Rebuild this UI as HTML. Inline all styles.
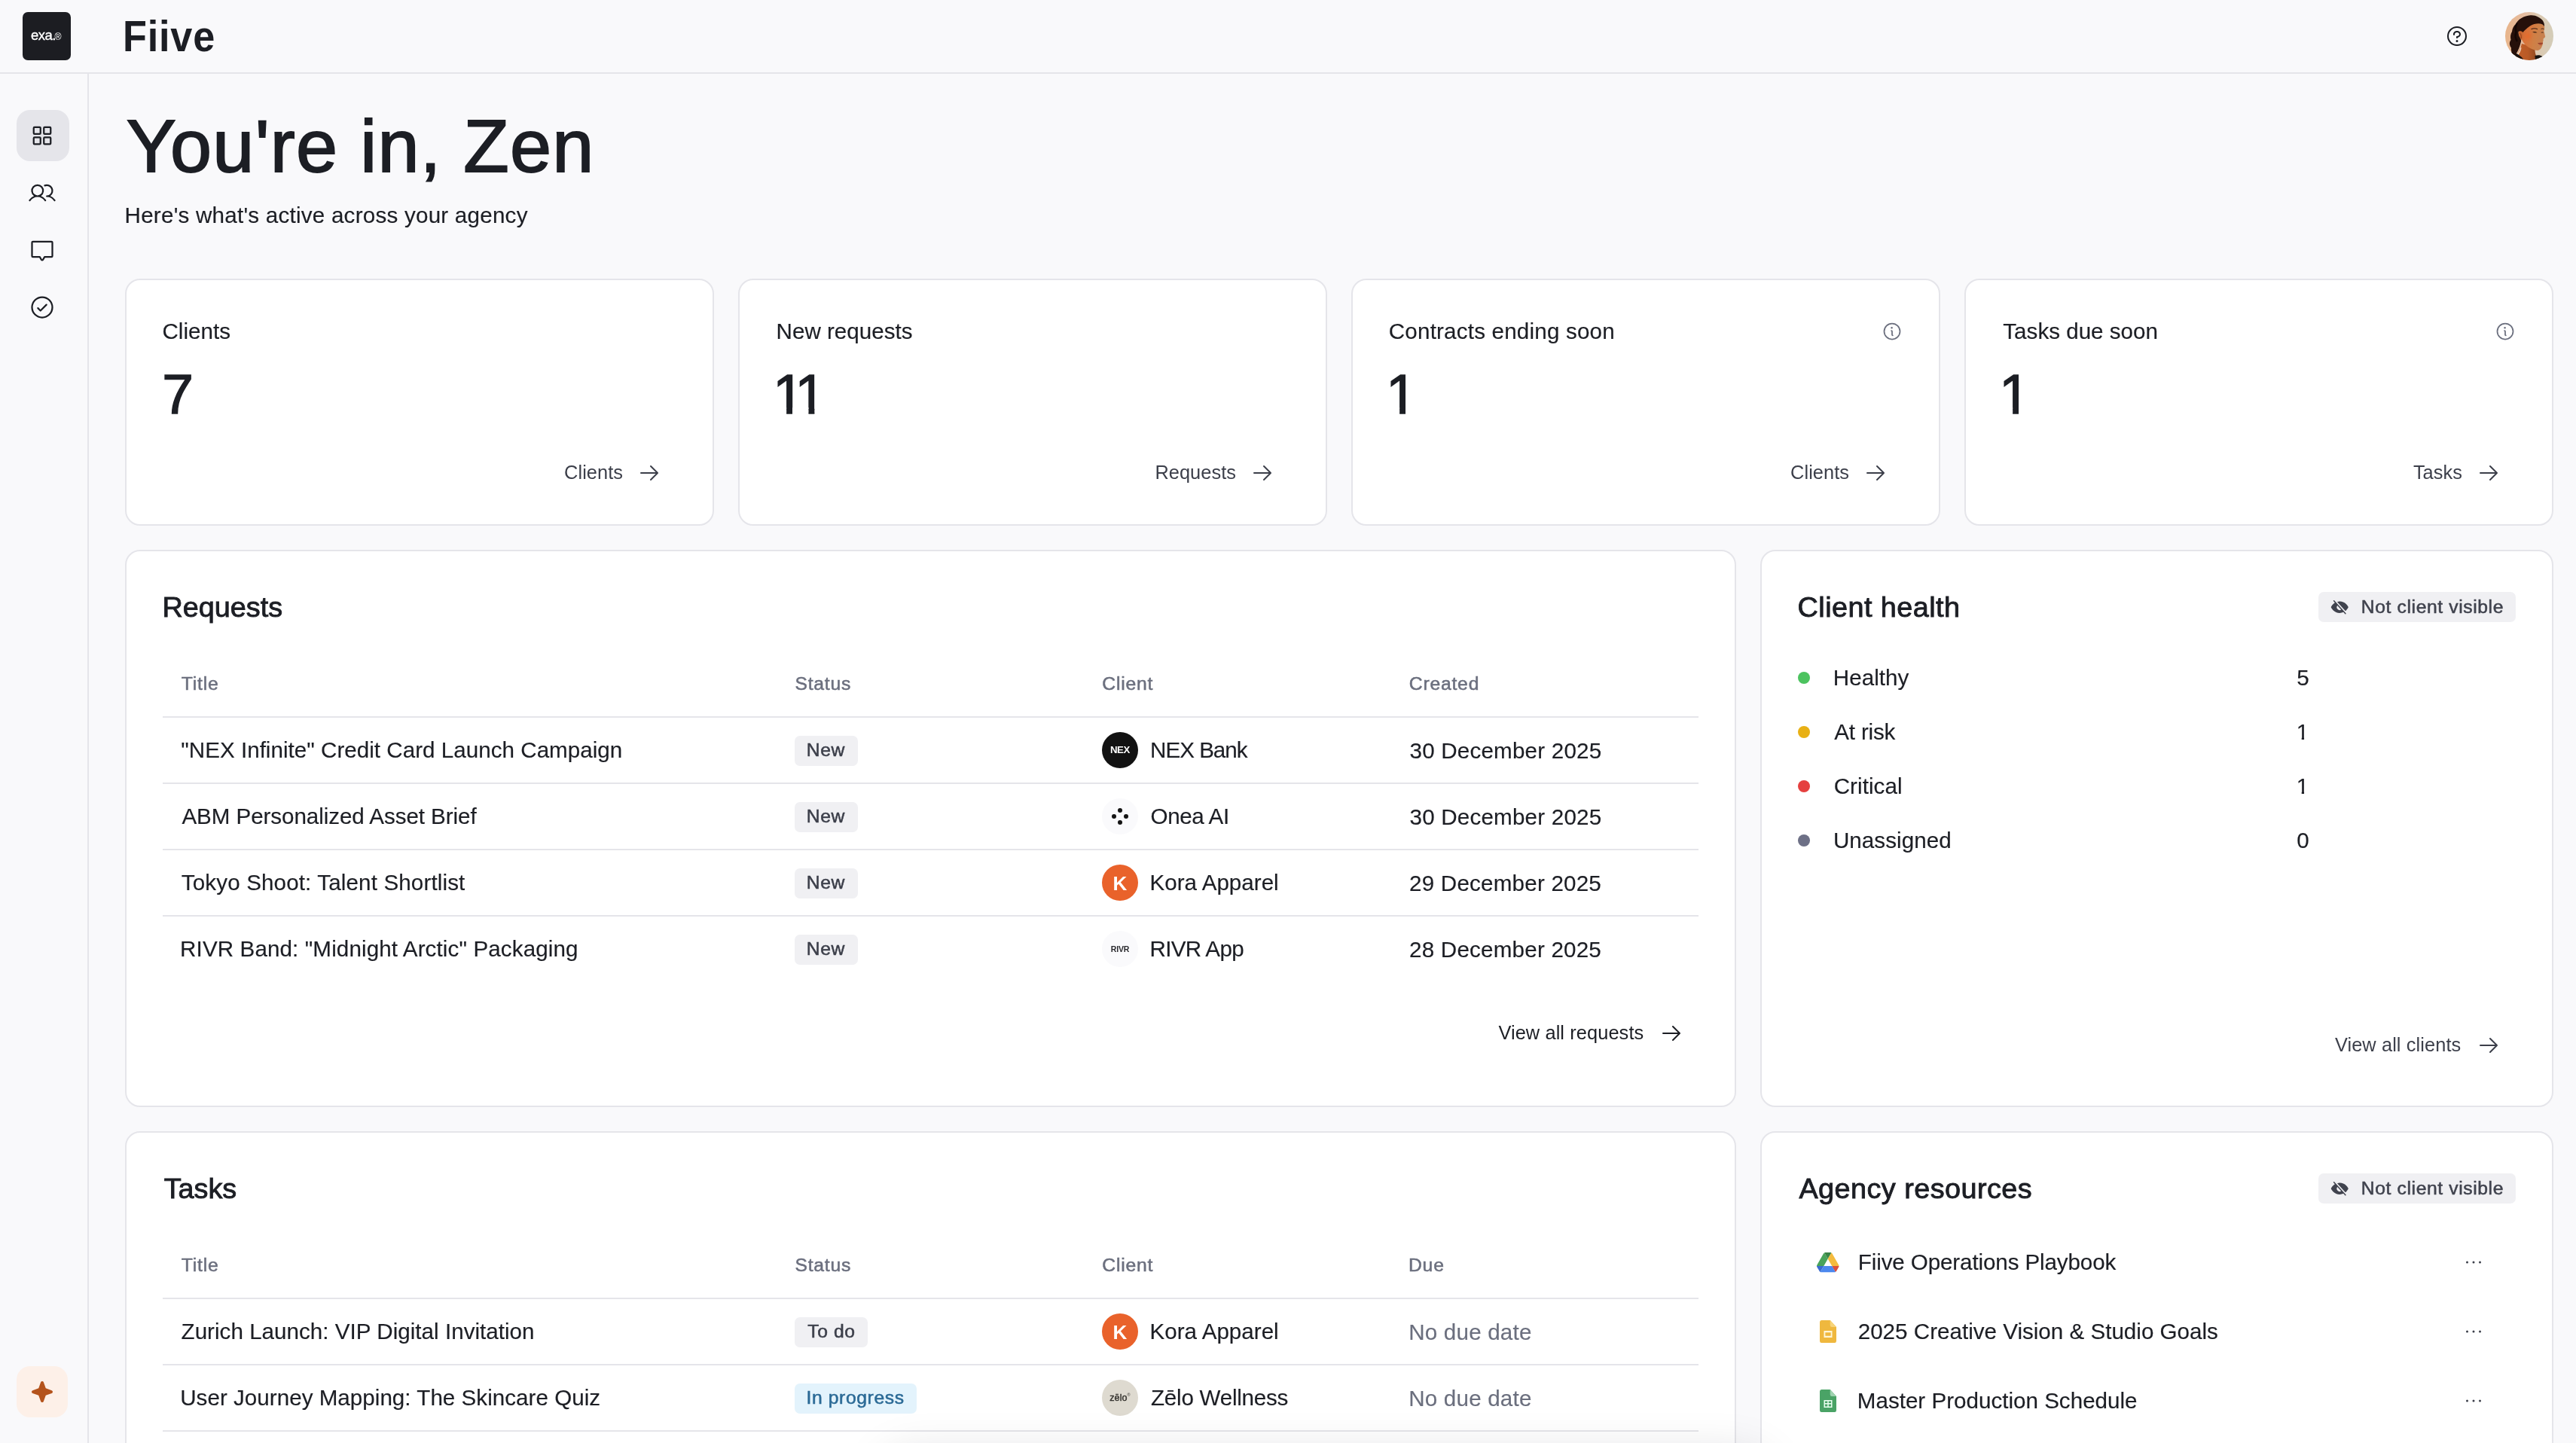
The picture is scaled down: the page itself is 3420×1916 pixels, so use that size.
<!DOCTYPE html>
<html lang="en">
<head>
<meta charset="utf-8">
<title>Fiive – Dashboard</title>
<meta name="viewport" content="width=3420">
<style>
*{box-sizing:border-box;margin:0;padding:0}
html,body{width:3420px;height:1916px;overflow:hidden;background:#f9f9fb}
header,nav,main{will-change:transform}
body{font-family:"Liberation Sans",Arial,sans-serif;color:#1c1e24;position:relative;-webkit-font-smoothing:antialiased}
.t{position:absolute;line-height:1;white-space:nowrap;font-weight:400}
.ic{position:absolute;display:block;overflow:visible}
.abs{position:absolute}
header{position:absolute;left:0;top:0;width:3420px;height:98px;border-bottom:2px solid #e5e5ea}
nav{position:absolute;left:0;top:98px;width:118px;height:1818px;border-right:2px solid #e5e5ea}
main{position:absolute;left:118px;top:98px;width:3302px;height:1818px;overflow:hidden}
.card{position:absolute;background:#fff;border:2px solid #e5e5ea;border-radius:20px}
.dark{color:#1c1e24}
.gray{color:#6b6f7e}
.lnk{color:#3c3f4a}
.med,.med2{}
.semi{-webkit-text-stroke:1.4px currentColor}
.hl{position:absolute;height:2px;background:#e5e5ea}
.badge{position:absolute;height:40px;border-radius:7px;background:#f0f0f3}
.badge.blue{background:#e3f3fc}
.av{position:absolute;width:48px;height:48px;border-radius:50%;overflow:hidden}
.dot{position:absolute;width:16px;height:16px;border-radius:50%}
.navbtn{position:absolute;left:22px;width:70px;height:68px;border-radius:18px}
</style>
</head>
<body>
<header>
<div class="abs" style="left:30px;top:16px;width:64px;height:64px;border-radius:7px;background:#1c1d22"></div>
<span class="t " style="left:41.01px;top:37.94px;font-size:18.50px;letter-spacing:-0.55px;color:#fff;-webkit-text-stroke:0.35px #fff;">exa.</span>
<span class="t " style="left:72.51px;top:43.22px;font-size:12.26px;color:#fff;">®</span>
<span class="t " style="left:162.51px;top:18.81px;font-size:58.00px;color:#1c1e24;font-weight:700;transform:scaleX(0.9);transform-origin:0 0;letter-spacing:0.9px;">Fiive</span>
<svg class="ic" style="left:3246.00px;top:32.00px" width="32" height="32" viewBox="0 0 256 256" aria-hidden="true"><path fill="#1c1e24" d="M140,180a12,12,0,1,1-12-12A12,12,0,0,1,140,180ZM128,72c-22.06,0-40,16.15-40,36v4a8,8,0,0,0,16,0v-4c0-11,10.77-20,24-20s24,9,24,20-10.77,20-24,20a8,8,0,0,0-8,8v8a8,8,0,0,0,16,0v-.72c18.24-3.35,32-17.9,32-35.28C168,88.15,150.06,72,128,72Zm104,56A104,104,0,1,1,128,24,104.11,104.11,0,0,1,232,128Zm-16,0a88,88,0,1,0-88,88A88.1,88.1,0,0,0,216,128Z"/></svg>
<svg class="ic" style="left:3326px;top:16px" width="64" height="64" viewBox="0 0 64 64" aria-hidden="true">
<defs><clipPath id="avc"><circle cx="32" cy="32" r="32"/></clipPath>
<linearGradient id="avbg" x1="0" x2="1" y1="0" y2="0"><stop offset="0" stop-color="#e8b48a"/><stop offset="0.4" stop-color="#e6bda0"/><stop offset="0.7" stop-color="#dccab2"/><stop offset="1" stop-color="#d3ccb8"/></linearGradient>
<linearGradient id="avsk" x1="0" x2="1" y1="0" y2="0.25"><stop offset="0" stop-color="#c9622a"/><stop offset="0.35" stop-color="#d9733a"/><stop offset="0.7" stop-color="#cf8046"/><stop offset="1" stop-color="#c78150"/></linearGradient>
<linearGradient id="avnk" x1="0" x2="1" y1="0" y2="0"><stop offset="0" stop-color="#c4602a"/><stop offset="0.6" stop-color="#b95a26"/><stop offset="1" stop-color="#8f4a22"/></linearGradient>
<radialGradient id="avhl" cx="0.5" cy="0.5" r="0.5"><stop offset="0" stop-color="#e56a2c" stop-opacity="0.9"/><stop offset="1" stop-color="#e56a2c" stop-opacity="0"/></radialGradient></defs>
<g clip-path="url(#avc)">
<rect width="64" height="64" fill="url(#avbg)"/>
<path d="M22 42 C21 48 17 54 13 60 L12 64 L42 64 L41 58 C40 55 39.500 53 39.500 50 L30 44 Z" fill="url(#avnk)"/>
<path d="M20.500 47 C19.500 51 17.500 54 15.500 56 L17.500 57 C19.500 54 21 51 21.500 47.500 Z" fill="#ead9c8"/>
<path d="M5 54 C10 52 16 55 22 60 L25 64 L4 64 Z" fill="#17120f"/>
<path d="M39.500 58 C43 56.500 47 57 49.500 59 L50 64 L40 64 Z" fill="#15110f"/>
<path d="M28 17 C34 14 46 14 51.600 17 C52.600 20 52.300 22.500 51.400 25 C51.800 27 52.600 30 53.200 32.800 C52.500 34.200 51.200 35 50.600 35.600 C50.800 37 50.600 38.500 50 40 C50.200 42 49.600 44 48.600 46 C47.600 48.800 45.500 50.800 43 51 C38 51 32 48 28 44.500 C25 42 23 39 22 36 L19 26 Z" fill="url(#avsk)"/>
<ellipse cx="30" cy="32" rx="7" ry="8" fill="url(#avhl)"/>
<path d="M17.500 26 C19.500 24.500 22 25.500 22.600 29 C23 32 23 35 22.200 37.500 C20 36 18 32 17.500 26 Z" fill="#c9662f"/>
<path d="M19.500 28 C21 29 21.500 32 21.400 35" stroke="#8d3d1c" stroke-width="0.9" fill="none"/>
<path d="M33.500 4.200 C40 3.600 46.500 7 50 11.500 C51.600 14 52.200 16.500 52 19 C51 17.500 50 16.500 48.500 16 C44 14.500 38 15.500 33 18.500 C28.500 21.500 25.500 24.500 23.500 27 C22 25 19 24.500 17.500 26.200 C17.500 28 17.800 30 18.500 32 C20 35 21.500 36.500 21 39 C20 43 19 47 16.500 52 C15 55 13 57.500 11 57 C8.500 54.500 7.500 51 8 47.500 C5.500 44 5 40.500 7.500 37 C6.500 33 7 29 9 26 C9.500 22 11 18.500 14 16 C17 9.500 25 4.800 33.500 4.200 Z" fill="#26100a"/>
<path d="M15.500 15.500 C13.500 19 13.500 23 14.500 27 C13 31 13.500 35 15.500 38" stroke="#120604" stroke-width="2.400" fill="none" stroke-linecap="round"/>
<path d="M34.500 22.800 C37.500 21.400 40.500 21.600 43 22.800" stroke="#3d1e12" stroke-width="1.100" fill="none"/>
<path d="M47.500 22.600 C49 21.800 50.500 22 51.600 22.800" stroke="#3d1e12" stroke-width="1" fill="none"/>
<path d="M36 26.500 C38 25.600 40.500 25.800 42.500 27.200 C40.500 27.800 38 27.800 36 26.500 Z" fill="#3b2014"/>
<path d="M47.200 27 C48.600 26.200 50.200 26.300 51.200 27 C50 27.800 48.400 27.800 47.200 27 Z" fill="#3b2014"/>
<path d="M43.500 41.400 C45.500 40.400 48 40.400 50 41 C49.600 43 48.600 44 47 44 C45.500 43.800 44.200 42.800 43.500 41.400 Z" fill="#b5583a"/>
<path d="M43.500 41.400 C46 41.800 48 41.800 50 41.200" stroke="#7f3120" stroke-width="0.700" fill="none"/>
</g></svg>
</header>
<nav>
<div class="navbtn" style="top:48px;background:#e5e5ea"></div>
<svg class="ic" style="left:38.00px;top:64.00px" width="36" height="36" viewBox="0 0 256 256" aria-hidden="true"><g fill="none" stroke="#1c1e24" stroke-width="16" stroke-linejoin="round"><rect x="48" y="48" width="64" height="64" rx="8"/><rect x="144" y="48" width="64" height="64" rx="8"/><rect x="48" y="144" width="64" height="64" rx="8"/><rect x="144" y="144" width="64" height="64" rx="8"/></g></svg>
<svg class="ic" style="left:38.00px;top:140.00px" width="36" height="36" viewBox="0 0 256 256" aria-hidden="true"><path fill="#1c1e24" d="M117.25,157.92a60,60,0,1,0-66.5,0A95.83,95.83,0,0,0,3.53,195.63a8,8,0,1,0,13.4,8.74,80,80,0,0,1,134.14,0,8,8,0,0,0,13.4-8.74A95.83,95.83,0,0,0,117.25,157.92ZM40,108a44,44,0,1,1,44,44A44.05,44.05,0,0,1,40,108Zm210.14,98.7a8,8,0,0,1-11.07-2.33A79.83,79.83,0,0,0,172,168a8,8,0,0,1,0-16,44,44,0,1,0-16.34-84.87,8,8,0,1,1-5.94-14.85,60,60,0,0,1,55.53,105.64,95.83,95.83,0,0,1,47.22,37.71A8,8,0,0,1,250.14,206.7Z"/></svg>
<svg class="ic" style="left:38.00px;top:215.60px" width="36" height="36" viewBox="0 0 256 256" aria-hidden="true"><path fill="#1c1e24" d="M216,40H40A16,16,0,0,0,24,56V184a16,16,0,0,0,16,16h60.43l13.68,23.94a16,16,0,0,0,27.78,0L155.57,200H216a16,16,0,0,0,16-16V56A16,16,0,0,0,216,40Zm0,144H150.93a8,8,0,0,0-6.95,4l-16,28-16-28a8,8,0,0,0-6.95-4H40V56H216V184Z"/></svg>
<svg class="ic" style="left:38.00px;top:292.00px" width="36" height="36" viewBox="0 0 256 256" aria-hidden="true"><path fill="#1c1e24" d="M173.66,98.34a8,8,0,0,1,0,11.32l-56,56a8,8,0,0,1-11.32,0l-24-24a8,8,0,0,1,11.32-11.32L112,148.69l50.34-50.35A8,8,0,0,1,173.66,98.34ZM232,128A104,104,0,1,1,128,24,104.11,104.11,0,0,1,232,128Zm-16,0a88,88,0,1,0-88,88A88.1,88.1,0,0,0,216,128Z"/></svg>
<div class="navbtn" style="top:1716px;width:68px;background:#fdf0e8"></div>
<svg class="ic" style="left:40.00px;top:1734.00px" width="32" height="32" viewBox="0 0 256 256" aria-hidden="true"><path fill="#b4531c" d="M240,128a15.79,15.79,0,0,1-10.5,15l-63.44,23.07L143,229.5a16,16,0,0,1-30,0L89.93,166,26.5,143a16,16,0,0,1,0-30L90,89.93,113,26.5a16,16,0,0,1,30,0L166.07,90,229.5,113A15.79,15.79,0,0,1,240,128Z"/></svg>
</nav>
<main>
<h1 class="t dark med2" style="left:49.82px;top:45.60px;font-size:99.00px;letter-spacing:1.26px;-webkit-text-stroke:1.9px currentColor;">You're in, Zen</h1>
<p class="t dark" style="left:47.57px;top:172.94px;font-size:29.60px;letter-spacing:0.23px;-webkit-text-stroke:0.15px currentColor;">Here's what's active across your agency</p>
<section class="card" style="left:48px;top:272px;width:782px;height:328px">
<h3 class="t dark" style="left:47.50px;top:52.94px;font-size:29.60px;-webkit-text-stroke:0.15px currentColor;">Clients</h3>
<strong class="t dark" style="left:47.16px;top:113.81px;font-size:74.88px;font-weight:400;-webkit-text-stroke:1.5px currentColor;">7</strong>
<a class="t lnk" style="right:119px;top:242.53px;font-size:25.37px;letter-spacing:0.06px">Clients</a>
<svg class="ic" style="left:678.00px;top:240.00px" width="32" height="32" viewBox="0 0 256 256" aria-hidden="true"><path fill="#3c3f4a" d="M221.66,133.66l-72,72a8,8,0,0,1-11.32-11.32L196.69,136H40a8,8,0,0,1,0-16H196.69L138.34,61.66a8,8,0,0,1,11.32-11.32l72,72A8,8,0,0,1,221.66,133.66Z"/></svg>
</section>
<section class="card" style="left:862px;top:272px;width:782px;height:328px">
<h3 class="t dark" style="left:48.57px;top:52.94px;font-size:29.60px;-webkit-text-stroke:0.15px currentColor;">New requests</h3>
<strong class="t dark" style="left:43.95px;top:113.81px;font-size:74.88px;font-weight:400;-webkit-text-stroke:1.5px currentColor;clip-path:polygon(0.00px 0.00px,55.39px 0.00px,55.39px 74.88px,47.57px 74.88px,47.57px 55.44px,26.05px 55.44px,26.05px 74.88px,18.23px 74.88px,18.23px 55.44px,0.00px 55.44px);letter-spacing:-12.3px;font-kerning:none;">11</strong>
<a class="t lnk" style="right:119px;top:242.53px;font-size:25.37px;letter-spacing:0.06px">Requests</a>
<svg class="ic" style="left:678.00px;top:240.00px" width="32" height="32" viewBox="0 0 256 256" aria-hidden="true"><path fill="#3c3f4a" d="M221.66,133.66l-72,72a8,8,0,0,1-11.32-11.32L196.69,136H40a8,8,0,0,1,0-16H196.69L138.34,61.66a8,8,0,0,1,11.32-11.32l72,72A8,8,0,0,1,221.66,133.66Z"/></svg>
</section>
<section class="card" style="left:1676px;top:272px;width:782px;height:328px">
<h3 class="t dark" style="left:47.80px;top:52.94px;font-size:29.60px;letter-spacing:0.19px;-webkit-text-stroke:0.15px currentColor;">Contracts ending soon</h3>
<strong class="t dark" style="left:43.95px;top:113.81px;font-size:74.88px;font-weight:400;-webkit-text-stroke:1.5px currentColor;clip-path:polygon(0.00px 0.00px,26.05px 0.00px,26.05px 74.88px,18.23px 74.88px,18.23px 55.44px,0.00px 55.44px);letter-spacing:-12.3px;font-kerning:none;">1</strong>
<a class="t lnk" style="right:119px;top:242.53px;font-size:25.37px;letter-spacing:0.06px">Clients</a>
<svg class="ic" style="left:678.00px;top:240.00px" width="32" height="32" viewBox="0 0 256 256" aria-hidden="true"><path fill="#3c3f4a" d="M221.66,133.66l-72,72a8,8,0,0,1-11.32-11.32L196.69,136H40a8,8,0,0,1,0-16H196.69L138.34,61.66a8,8,0,0,1,11.32-11.32l72,72A8,8,0,0,1,221.66,133.66Z"/></svg>
<svg class="ic" style="left:702.00px;top:54.00px" width="28" height="28" viewBox="0 0 256 256" aria-hidden="true"><path fill="#6b6f7e" d="M128,24A104,104,0,1,0,232,128,104.11,104.11,0,0,0,128,24Zm0,192a88,88,0,1,1,88-88A88.1,88.1,0,0,1,128,216Zm16-40a8,8,0,0,1-8,8,16,16,0,0,1-16-16V128a8,8,0,0,1,0-16,16,16,0,0,1,16,16v40A8,8,0,0,1,144,176ZM112,84a12,12,0,1,1,12,12A12,12,0,0,1,112,84Z"/></svg>
</section>
<section class="card" style="left:2490px;top:272px;width:782px;height:328px">
<h3 class="t dark" style="left:49.34px;top:52.94px;font-size:29.60px;-webkit-text-stroke:0.15px currentColor;">Tasks due soon</h3>
<strong class="t dark" style="left:43.95px;top:113.81px;font-size:74.88px;font-weight:400;-webkit-text-stroke:1.5px currentColor;clip-path:polygon(0.00px 0.00px,26.05px 0.00px,26.05px 74.88px,18.23px 74.88px,18.23px 55.44px,0.00px 55.44px);letter-spacing:-12.3px;font-kerning:none;">1</strong>
<a class="t lnk" style="right:119px;top:242.53px;font-size:25.37px;letter-spacing:0.06px">Tasks</a>
<svg class="ic" style="left:678.00px;top:240.00px" width="32" height="32" viewBox="0 0 256 256" aria-hidden="true"><path fill="#3c3f4a" d="M221.66,133.66l-72,72a8,8,0,0,1-11.32-11.32L196.69,136H40a8,8,0,0,1,0-16H196.69L138.34,61.66a8,8,0,0,1,11.32-11.32l72,72A8,8,0,0,1,221.66,133.66Z"/></svg>
<svg class="ic" style="left:702.00px;top:54.00px" width="28" height="28" viewBox="0 0 256 256" aria-hidden="true"><path fill="#6b6f7e" d="M128,24A104,104,0,1,0,232,128,104.11,104.11,0,0,0,128,24Zm0,192a88,88,0,1,1,88-88A88.1,88.1,0,0,1,128,216Zm16-40a8,8,0,0,1-8,8,16,16,0,0,1-16-16V128a8,8,0,0,1,0-16,16,16,0,0,1,16,16v40A8,8,0,0,1,144,176ZM112,84a12,12,0,1,1,12,12A12,12,0,0,1,112,84Z"/></svg>
</section>
<section class="card" style="left:48px;top:632px;width:2139px;height:740px">
<h2 class="t dark med" style="left:47.40px;top:55.80px;font-size:37.80px;-webkit-text-stroke:0.9px currentColor;">Requests</h2>
<span class="t gray med" style="left:72.85px;top:163.89px;font-size:24.70px;letter-spacing:0.80px;-webkit-text-stroke:0.55px currentColor;">Title</span>
<span class="t gray med" style="left:887.38px;top:163.89px;font-size:24.70px;letter-spacing:0.80px;-webkit-text-stroke:0.55px currentColor;">Status</span>
<span class="t gray med" style="left:1295.25px;top:163.89px;font-size:24.70px;letter-spacing:0.80px;-webkit-text-stroke:0.55px currentColor;">Client</span>
<span class="t gray med" style="left:1702.75px;top:163.89px;font-size:24.70px;letter-spacing:0.80px;-webkit-text-stroke:0.55px currentColor;">Created</span>
<span class="hl" style="left:48px;top:219px;width:2039px"></span>
<span class="t dark" style="left:72.24px;top:248.94px;font-size:29.60px;letter-spacing:0.02px;-webkit-text-stroke:0.15px currentColor;">"NEX Infinite" Credit Card Launch Campaign</span>
<span class="badge " style="left:887px;top:245px;width:84px"><span class="t med" style="left:15.77px;top:6.79px;font-size:24.70px;letter-spacing:0.60px;color:#3c3f4a;-webkit-text-stroke:0.55px #3c3f4a">New</span></span>
<span class="av" style="left:1295px;top:240px;background:#121212"><span class="t" style="left:0;width:48px;text-align:center;top:17.2px;font-size:13.2px;font-weight:700;color:#fff;letter-spacing:-0.3px">NEX</span></span>
<span class="t dark" style="left:1359.07px;top:248.94px;font-size:29.60px;letter-spacing:-1.00px;-webkit-text-stroke:0.15px currentColor;">NEX Bank</span>
<span class="t dark" style="left:1703.47px;top:249.54px;font-size:29.60px;letter-spacing:0.20px;-webkit-text-stroke:0.15px currentColor;">30 December 2025</span>
<span class="hl" style="left:48px;top:307px;width:2039px"></span>
<span class="t dark" style="left:73.44px;top:336.94px;font-size:29.60px;letter-spacing:-0.07px;-webkit-text-stroke:0.15px currentColor;">ABM Personalized Asset Brief</span>
<span class="badge " style="left:887px;top:333px;width:84px"><span class="t med" style="left:15.77px;top:6.79px;font-size:24.70px;letter-spacing:0.60px;color:#3c3f4a;-webkit-text-stroke:0.55px #3c3f4a">New</span></span>
<span class="av" style="left:1295px;top:328px;background:#fafafc"><svg width="48" height="48" viewBox="0 0 48 48" style="display:block" aria-hidden="true"><g fill="#141414"><circle cx="24" cy="16" r="3"/><circle cx="16" cy="24" r="3"/><circle cx="32" cy="24" r="3"/><circle cx="24" cy="32" r="3"/></g></svg></span>
<span class="t dark" style="left:1359.60px;top:336.94px;font-size:29.60px;letter-spacing:-0.40px;-webkit-text-stroke:0.15px currentColor;">Onea AI</span>
<span class="t dark" style="left:1703.47px;top:337.54px;font-size:29.60px;letter-spacing:0.20px;-webkit-text-stroke:0.15px currentColor;">30 December 2025</span>
<span class="hl" style="left:48px;top:395px;width:2039px"></span>
<span class="t dark" style="left:72.84px;top:424.94px;font-size:29.60px;letter-spacing:0.13px;-webkit-text-stroke:0.15px currentColor;">Tokyo Shoot: Talent Shortlist</span>
<span class="badge " style="left:887px;top:421px;width:84px"><span class="t med" style="left:15.77px;top:6.79px;font-size:24.70px;letter-spacing:0.60px;color:#3c3f4a;-webkit-text-stroke:0.55px #3c3f4a">New</span></span>
<span class="av" style="left:1295px;top:416px;background:#e9622b"><span class="t" style="left:0;width:48px;text-align:center;top:11.5px;font-size:26px;font-weight:700;color:#fff">K</span></span>
<span class="t dark" style="left:1358.57px;top:424.94px;font-size:29.60px;-webkit-text-stroke:0.15px currentColor;">Kora Apparel</span>
<span class="t dark" style="left:1703.11px;top:425.54px;font-size:29.60px;letter-spacing:0.20px;-webkit-text-stroke:0.15px currentColor;">29 December 2025</span>
<span class="hl" style="left:48px;top:483px;width:2039px"></span>
<span class="t dark" style="left:71.07px;top:512.94px;font-size:29.60px;letter-spacing:0.11px;-webkit-text-stroke:0.15px currentColor;">RIVR Band: "Midnight Arctic" Packaging</span>
<span class="badge " style="left:887px;top:509px;width:84px"><span class="t med" style="left:15.77px;top:6.79px;font-size:24.70px;letter-spacing:0.60px;color:#3c3f4a;-webkit-text-stroke:0.55px #3c3f4a">New</span></span>
<span class="av" style="left:1295px;top:504px;background:#fafafc"><span class="t" style="left:0;width:48px;text-align:center;top:19px;font-size:10.5px;font-weight:700;color:#2a2a2e;letter-spacing:-0.2px">RIVR</span></span>
<span class="t dark" style="left:1358.57px;top:512.94px;font-size:29.60px;letter-spacing:-0.70px;-webkit-text-stroke:0.15px currentColor;">RIVR App</span>
<span class="t dark" style="left:1703.11px;top:513.54px;font-size:29.60px;letter-spacing:0.20px;-webkit-text-stroke:0.15px currentColor;">28 December 2025</span>
<a class="t dark" style="left:1821.39px;top:626.52px;font-size:25.37px;letter-spacing:0.10px;">View all requests</a>
<svg class="ic" style="left:2035.00px;top:624.00px" width="32" height="32" viewBox="0 0 256 256" aria-hidden="true"><path fill="#1c1e24" d="M221.66,133.66l-72,72a8,8,0,0,1-11.32-11.32L196.69,136H40a8,8,0,0,1,0-16H196.69L138.34,61.66a8,8,0,0,1,11.32-11.32l72,72A8,8,0,0,1,221.66,133.66Z"/></svg>
</section>
<section class="card" style="left:48px;top:1404px;width:2139px;height:700px">
<h2 class="t dark med" style="left:49.65px;top:55.80px;font-size:37.80px;-webkit-text-stroke:0.9px currentColor;">Tasks</h2>
<span class="t gray med" style="left:72.85px;top:163.89px;font-size:24.70px;letter-spacing:0.80px;-webkit-text-stroke:0.55px currentColor;">Title</span>
<span class="t gray med" style="left:887.38px;top:163.89px;font-size:24.70px;letter-spacing:0.80px;-webkit-text-stroke:0.55px currentColor;">Status</span>
<span class="t gray med" style="left:1295.25px;top:163.89px;font-size:24.70px;letter-spacing:0.80px;-webkit-text-stroke:0.55px currentColor;">Client</span>
<span class="t gray med" style="left:1701.97px;top:163.89px;font-size:24.70px;letter-spacing:0.80px;-webkit-text-stroke:0.55px currentColor;">Due</span>
<span class="hl" style="left:48px;top:219px;width:2039px"></span>
<span class="t dark" style="left:72.56px;top:248.94px;font-size:29.60px;letter-spacing:0.02px;-webkit-text-stroke:0.15px currentColor;">Zurich Launch: VIP Digital Invitation</span>
<span class="badge " style="left:887px;top:245px;width:97px"><span class="t med" style="left:17.25px;top:6.79px;font-size:24.70px;letter-spacing:0.60px;color:#3c3f4a;-webkit-text-stroke:0.55px #3c3f4a">To do</span></span>
<span class="av" style="left:1295px;top:240px;background:#e9622b"><span class="t" style="left:0;width:48px;text-align:center;top:11.5px;font-size:26px;font-weight:700;color:#fff">K</span></span>
<span class="t dark" style="left:1358.57px;top:248.94px;font-size:29.60px;-webkit-text-stroke:0.15px currentColor;">Kora Apparel</span>
<span class="t gray" style="left:1702.17px;top:249.54px;font-size:29.60px;letter-spacing:0.20px;-webkit-text-stroke:0.15px currentColor;">No due date</span>
<span class="hl" style="left:48px;top:307px;width:2039px"></span>
<span class="t dark" style="left:71.22px;top:336.94px;font-size:29.60px;letter-spacing:0.02px;-webkit-text-stroke:0.15px currentColor;">User Journey Mapping: The Skincare Quiz</span>
<span class="badge blue" style="left:887px;top:333px;width:162px"><span class="t med" style="left:15.52px;top:6.79px;font-size:24.70px;letter-spacing:0.60px;color:#2b6a96;-webkit-text-stroke:0.55px #2b6a96">In progress</span></span>
<span class="av" style="left:1295px;top:328px;background:#dedad0"><span class="t" style="left:0;width:48px;text-align:center;top:17.5px;font-size:12.5px;font-weight:400;-webkit-text-stroke:0.45px #35332f;color:#35332f;letter-spacing:0.1px">zēlo<span style="font-size:5.5px;vertical-align:6px;-webkit-text-stroke:0">®</span></span></span>
<span class="t dark" style="left:1360.06px;top:336.94px;font-size:29.60px;letter-spacing:-0.25px;-webkit-text-stroke:0.15px currentColor;">Zēlo Wellness</span>
<span class="t gray" style="left:1702.17px;top:337.54px;font-size:29.60px;letter-spacing:0.20px;-webkit-text-stroke:0.15px currentColor;">No due date</span>
<span class="hl" style="left:48px;top:395px;width:2039px"></span>
</section>
<section class="card" style="left:2219px;top:632px;width:1053px;height:740px">
<h2 class="t dark med" style="left:47.58px;top:56.00px;font-size:37.80px;letter-spacing:0.45px;-webkit-text-stroke:0.9px currentColor;">Client health</h2>
<span class="badge" style="left:739px;top:54px;width:262px"><svg class="ic" style="left:15.95px;top:7.75px" width="24.5" height="24.5" viewBox="0 0 256 256" aria-hidden="true"><path fill="#40434e" d="M96.68,57.87a4,4,0,0,1,2.08-6.6A130.13,130.13,0,0,1,128,48c34.88,0,66.57,13.26,91.66,38.35,18.83,18.83,27.3,37.62,27.65,38.41a8,8,0,0,1,0,6.5c-.35.79-8.82,19.57-27.65,38.4q-4.28,4.26-8.79,8.07a4,4,0,0,1-5.55-.36ZM213.92,210.62a8,8,0,1,1-11.84,10.76L180,197.13A127.21,127.21,0,0,1,128,208c-34.88,0-66.57-13.26-91.66-38.34C17.51,150.83,9,132.05,8.69,131.26a8,8,0,0,1,0-6.5C9,124,17.51,105.18,36.34,86.35a135,135,0,0,1,25-19.78L42.08,45.38A8,8,0,1,1,53.92,34.62Zm-65.49-48.25-52.69-58a40,40,0,0,0,52.69,58Z"/></svg><span class="t med" style="left:56.87px;top:8.29px;font-size:24.70px;letter-spacing:0.60px;color:#40434e;-webkit-text-stroke:0.55px #40434e">Not client visible</span></span>
<span class="dot" style="left:48px;top:160px;background:#4cc35f"></span>
<span class="t dark" style="left:94.77px;top:152.94px;font-size:29.60px;letter-spacing:0.05px;-webkit-text-stroke:0.15px currentColor;">Healthy</span>
<span class="t dark" style="left:710.21px;top:152.94px;font-size:29.60px;-webkit-text-stroke:0.15px currentColor;">5</span>
<span class="dot" style="left:48px;top:232px;background:#e8b014"></span>
<span class="t dark" style="left:96.34px;top:224.94px;font-size:29.60px;letter-spacing:-0.20px;-webkit-text-stroke:0.15px currentColor;">At risk</span>
<span class="t dark" style="left:709.65px;top:224.94px;font-size:29.60px;-webkit-text-stroke:0.15px currentColor;clip-path:polygon(0 0,10.41px 0,10.41px 29.60px,7.09px 29.60px,7.09px 21.95px,0 21.95px);">1</span>
<span class="dot" style="left:48px;top:304px;background:#e5403f"></span>
<span class="t dark" style="left:95.70px;top:296.94px;font-size:29.60px;letter-spacing:0.05px;-webkit-text-stroke:0.15px currentColor;">Critical</span>
<span class="t dark" style="left:709.65px;top:296.94px;font-size:29.60px;-webkit-text-stroke:0.15px currentColor;clip-path:polygon(0 0,10.41px 0,10.41px 29.60px,7.09px 29.60px,7.09px 21.95px,0 21.95px);">1</span>
<span class="dot" style="left:48px;top:376px;background:#6d7086"></span>
<span class="t dark" style="left:94.92px;top:368.94px;font-size:29.60px;letter-spacing:0.05px;-webkit-text-stroke:0.15px currentColor;">Unassigned</span>
<span class="t dark" style="left:710.24px;top:368.94px;font-size:29.60px;-webkit-text-stroke:0.15px currentColor;">0</span>
<a class="t lnk" style="left:760.89px;top:642.52px;font-size:25.37px;letter-spacing:0.10px;">View all clients</a>
<svg class="ic" style="left:949.00px;top:640.40px" width="32" height="32" viewBox="0 0 256 256" aria-hidden="true"><path fill="#3c3f4a" d="M221.66,133.66l-72,72a8,8,0,0,1-11.32-11.32L196.69,136H40a8,8,0,0,1,0-16H196.69L138.34,61.66a8,8,0,0,1,11.32-11.32l72,72A8,8,0,0,1,221.66,133.66Z"/></svg>
</section>
<section class="card" style="left:2219px;top:1404px;width:1053px;height:700px">
<h2 class="t dark med" style="left:49.43px;top:56.00px;font-size:37.80px;letter-spacing:0.45px;-webkit-text-stroke:0.9px currentColor;">Agency resources</h2>
<span class="badge" style="left:739px;top:54px;width:262px"><svg class="ic" style="left:15.95px;top:7.75px" width="24.5" height="24.5" viewBox="0 0 256 256" aria-hidden="true"><path fill="#40434e" d="M96.68,57.87a4,4,0,0,1,2.08-6.6A130.13,130.13,0,0,1,128,48c34.88,0,66.57,13.26,91.66,38.35,18.83,18.83,27.3,37.62,27.65,38.41a8,8,0,0,1,0,6.5c-.35.79-8.82,19.57-27.65,38.4q-4.28,4.26-8.79,8.07a4,4,0,0,1-5.55-.36ZM213.92,210.62a8,8,0,1,1-11.84,10.76L180,197.13A127.21,127.21,0,0,1,128,208c-34.88,0-66.57-13.26-91.66-38.34C17.51,150.83,9,132.05,8.69,131.26a8,8,0,0,1,0-6.5C9,124,17.51,105.18,36.34,86.35a135,135,0,0,1,25-19.78L42.08,45.38A8,8,0,1,1,53.92,34.62Zm-65.49-48.25-52.69-58a40,40,0,0,0,52.69,58Z"/></svg><span class="t med" style="left:56.87px;top:8.29px;font-size:24.70px;letter-spacing:0.60px;color:#40434e;-webkit-text-stroke:0.55px #40434e">Not client visible</span></span>
<svg class="ic" style="left:73.25px;top:158.79999999999995px" width="29.5" height="26.4" viewBox="0 0 87.3 78" aria-hidden="true"><path d="m6.6 66.85 3.85 6.65c.8 1.4 1.95 2.5 3.3 3.3l13.75-23.8h-27.5c0 1.55.4 3.1 1.2 4.5z" fill="#3a6cd0"/><path d="m43.65 25-13.75-23.8c-1.35.8-2.5 1.9-3.3 3.3l-25.4 44a9.06 9.06 0 0 0 -1.2 4.5h27.5z" fill="#4aa45b"/><path d="m73.55 76.8c1.35-.8 2.5-1.9 3.3-3.3l1.6-2.75 7.65-13.25c.8-1.4 1.2-2.95 1.2-4.5h-27.502l5.852 11.5z" fill="#dc4f3c"/><path d="m43.65 25 13.75-23.8c-1.35-.8-2.9-1.2-4.5-1.2h-18.5c-1.6 0-3.15.45-4.5 1.2z" fill="#3b8446"/><path d="m59.8 53h-32.3l-13.75 23.8c1.35.8 2.9 1.2 4.5 1.2h50.8c1.6 0 3.15-.45 4.5-1.2z" fill="#4c88ee"/><path d="m73.4 26.5-12.7-22c-.8-1.4-1.95-2.5-3.3-3.3l-13.75 23.8 16.15 28h27.45c0-1.55-.4-3.1-1.2-4.5z" fill="#f4bb3e"/></svg>
<span class="t dark" style="left:127.77px;top:156.74px;font-size:29.60px;letter-spacing:-0.12px;-webkit-text-stroke:0.15px currentColor;">Fiive Operations Playbook</span>
<svg class="ic" style="left:929.00px;top:156.00px" width="32" height="32" viewBox="0 0 256 256" aria-hidden="true"><g fill="#3c3f4a"><circle cx="60" cy="128" r="12"/><circle cx="128" cy="128" r="12"/><circle cx="196" cy="128" r="12"/></g></svg>
<svg class="ic" style="left:77.0px;top:249.0px" width="22" height="30" viewBox="0 0 24 30" preserveAspectRatio="none" aria-hidden="true"><path d="M2.5 0H15l9 9v18.5a2.5 2.5 0 0 1-2.5 2.5h-19A2.5 2.5 0 0 1 0 27.500V2.5A2.5 2.5 0 0 1 2.500 0Z" fill="#efb83e"/><path d="M15 0l9 9h-6.500A2.500 2.500 0 0 1 15 6.500Z" fill="#f7d47a"/><path d="M6 14h12v9H6Zm2 2.200v4.600h8v-4.600Z" fill="#fff5d6" fill-rule="evenodd"/></svg>
<span class="t dark" style="left:127.71px;top:248.74px;font-size:29.60px;-webkit-text-stroke:0.15px currentColor;">2025 Creative Vision &amp; Studio Goals</span>
<svg class="ic" style="left:929.00px;top:248.00px" width="32" height="32" viewBox="0 0 256 256" aria-hidden="true"><g fill="#3c3f4a"><circle cx="60" cy="128" r="12"/><circle cx="128" cy="128" r="12"/><circle cx="196" cy="128" r="12"/></g></svg>
<svg class="ic" style="left:77.0px;top:341.0px" width="22" height="30" viewBox="0 0 24 30" preserveAspectRatio="none" aria-hidden="true"><path d="M2.5 0H15l9 9v18.5a2.5 2.5 0 0 1-2.5 2.5h-19A2.5 2.5 0 0 1 0 27.500V2.5A2.5 2.5 0 0 1 2.500 0Z" fill="#4aa366"/><path d="M15 0l9 9h-6.500A2.500 2.500 0 0 1 15 6.500Z" fill="#9fd3b0"/><path d="M6 14h12v10H6Zm1.600 1.600v2.400h3.600v-2.400Zm5.200 0v2.400h3.600v-2.400Zm-5.200 4v2.800h3.600v-2.800Zm5.200 0v2.800h3.600v-2.800Z" fill="#eafff0" fill-rule="evenodd"/></svg>
<span class="t dark" style="left:126.77px;top:340.74px;font-size:29.60px;-webkit-text-stroke:0.15px currentColor;">Master Production Schedule</span>
<svg class="ic" style="left:929.00px;top:340.00px" width="32" height="32" viewBox="0 0 256 256" aria-hidden="true"><g fill="#3c3f4a"><circle cx="60" cy="128" r="12"/><circle cx="128" cy="128" r="12"/><circle cx="196" cy="128" r="12"/></g></svg>
</section>
<div class="abs" style="left:1052px;top:1832px;width:1180px;height:200px;border-radius:40px;box-shadow:0 0 60px rgba(20,20,30,0.13);pointer-events:none"></div>
</main>
</body>
</html>
